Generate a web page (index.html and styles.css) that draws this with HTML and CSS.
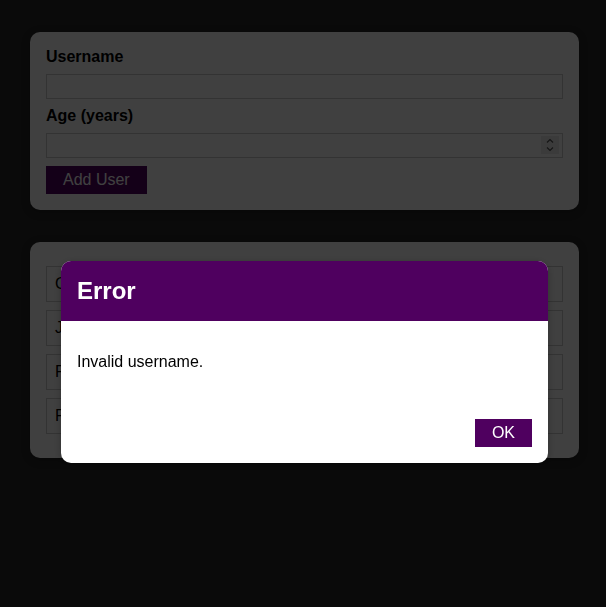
FILE: index.html
```html
<!DOCTYPE html>
<html lang="en">
<head>
<meta charset="utf-8">
<title>Add User</title>
<link rel="stylesheet" href="styles.css">
</head>
<body>
<main class="app">
  <section class="card input-card">
    <form class="user-form">
      <label class="field-label" for="username">Username</label>
      <input class="field" id="username" type="text">
      <label class="field-label" for="age">Age (years)</label>
      <div class="number-wrap">
        <input class="field field-number" id="age" type="number">
        <span class="spin" aria-hidden="true">
          <svg width="18" height="18" viewBox="0 0 18 18">
            <path d="M6 6.5 L9 3.5 L12 6.5" fill="none" stroke="#555" stroke-width="1.2"/>
            <path d="M6 11.5 L9 14.5 L12 11.5" fill="none" stroke="#555" stroke-width="1.2"/>
          </svg>
        </span>
      </div>
      <button class="button" type="button">Add User</button>
    </form>
  </section>
  <section class="card users-card">
    <ul class="user-list">
      <li class="user-item">Chris (25 years old)</li>
      <li class="user-item">Julie (31 years old)</li>
      <li class="user-item">Peter (42 years old)</li>
      <li class="user-item">Paul (28 years old)</li>
    </ul>
  </section>
</main>
<div class="backdrop"></div>
<div class="card modal" role="dialog">
  <header class="modal-header">
    <h2 class="modal-title">Error</h2>
  </header>
  <div class="modal-content">
    <p class="modal-text">Invalid username.</p>
  </div>
  <footer class="modal-actions">
    <button class="button" type="button">OK</button>
  </footer>
</div>
</body>
</html>
```

FILE: styles.css
```css
* {
  box-sizing: border-box;
}

html {
  font-family: "Liberation Sans", Arial, sans-serif;
  font-size: 16px;
}

body {
  margin: 0;
  background: #282828;
  min-height: 607px;
}

.app {
  display: flex;
  flex-direction: column;
  gap: 32px;
  padding-top: 32px;
  padding-left: 30px;
}

.card {
  background: #ffffff;
  box-shadow: 0 2px 8px rgba(0, 0, 0, 0.26);
  border-radius: 10px;
}

.input-card {
  width: 549px;
  padding: 16px;
}

.user-form {
  display: flex;
  flex-direction: column;
  align-items: flex-start;
}

.field-label {
  display: block;
  font-weight: bold;
  margin-bottom: 8px;
  line-height: 18.4px;
}

.field {
  font: inherit;
  display: block;
  width: 100%;
  height: 24.4px;
  border: 1px solid #cccccc;
  padding: 0 2px;
  margin: 0 0 8px;
  background: #ffffff;
}

.number-wrap {
  position: relative;
  width: 100%;
}

.field-number {
  -moz-appearance: textfield;
}

.field-number::-webkit-inner-spin-button,
.field-number::-webkit-outer-spin-button {
  -webkit-appearance: none;
  margin: 0;
}

.spin {
  position: absolute;
  top: 3px;
  right: 4px;
  width: 18px;
  height: 18px;
  background: #ececec;
  display: block;
}

.spin svg {
  display: block;
}

.button {
  font: inherit;
  border: 1px solid #4f005f;
  background: #4f005f;
  color: #ffffff;
  padding: 4px 16px;
  cursor: pointer;
  line-height: 18.4px;
}

.users-card {
  width: 549px;
}

.user-list {
  list-style: none;
  margin: 0;
  padding: 16px;
}

.user-item {
  border: 1px solid #cccccc;
  margin: 8px 0;
  padding: 8px;
  line-height: 18px;
}

.backdrop {
  position: fixed;
  inset: 0;
  z-index: 10;
  background: rgba(0, 0, 0, 0.75);
}

.modal {
  position: fixed;
  top: 261px;
  left: 61px;
  width: 487px;
  z-index: 100;
  overflow: hidden;
}

.modal-header {
  background: #4f005f;
  padding: 16px;
}

.modal-title {
  margin: 0;
  color: #ffffff;
  font-size: 24px;
  line-height: 27.6px;
}

.modal-content {
  padding: 16px;
}

.modal-text {
  margin: 16px 0;
  line-height: 18.4px;
}

.modal-actions {
  padding: 16px;
  display: flex;
  justify-content: flex-end;
}
```
